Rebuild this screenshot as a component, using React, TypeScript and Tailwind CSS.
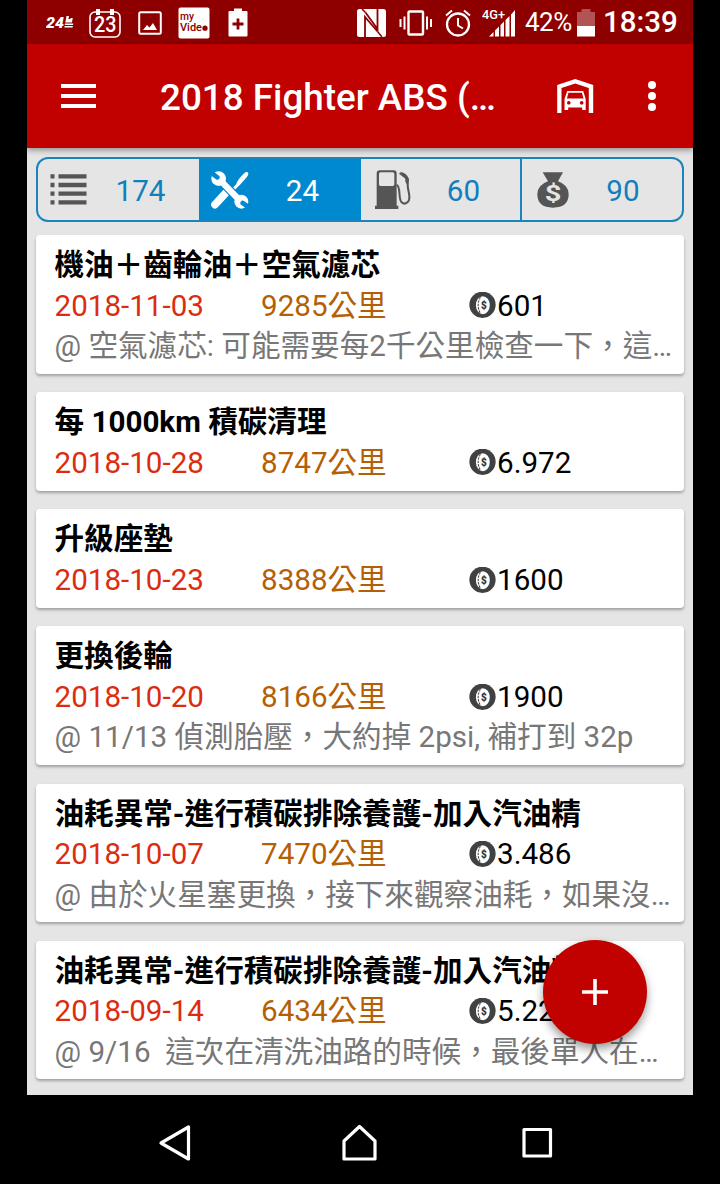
import type { ReactNode } from "react";
import clsx from "clsx";

type ServiceRecord = {
  title: string;
  date: string;
  distance: string;
  cost: string;
  note?: string;
};

const records: ServiceRecord[] = [
  {
    title: "機油＋齒輪油＋空氣濾芯",
    date: "2018-11-03",
    distance: "9285公里",
    cost: "601",
    note: "@ 空氣濾芯: 可能需要每2千公里檢查一下，這…",
  },
  { title: "每 1000km 積碳清理", date: "2018-10-28", distance: "8747公里", cost: "6.972" },
  { title: "升級座墊", date: "2018-10-23", distance: "8388公里", cost: "1600" },
  {
    title: "更換後輪",
    date: "2018-10-20",
    distance: "8166公里",
    cost: "1900",
    note: "@ 11/13 偵測胎壓，大約掉 2psi, 補打到 32p",
  },
  {
    title: "油耗異常-進行積碳排除養護-加入汽油精",
    date: "2018-10-07",
    distance: "7470公里",
    cost: "3.486",
    note: "@ 由於火星塞更換，接下來觀察油耗，如果沒…",
  },
  {
    title: "油耗異常-進行積碳排除養護-加入汽油精",
    date: "2018-09-14",
    distance: "6434公里",
    cost: "5.229",
    note: "@ 9/16  這次在清洗油路的時候，最後單人在…",
  },
];

function StatusBar() {
  return (
    <div className="flex h-11 shrink-0 items-center bg-[#8e0000] pt-[1px] pl-[19px] text-white">
      <svg className="h-[16px] w-[29px]" viewBox="0 0 29 16" fill="white">
        <text x="0" y="13" fontSize="15.500" fontWeight="900" fontStyle="italic" textLength="18" lengthAdjust="spacingAndGlyphs">
          24
        </text>
        <path d="M20.500 1h2.500l-.6 3h2l.2-1h2.200l-.9 4.500h-6.600zM19 8.500h8.300l-.3 1.500h-8.300zM18.600 11h8.300l-.3 1.500h-8.300z" />
      </svg>
      <svg className="ml-[14px] h-[30px] w-[32px]" viewBox="0 0 32 30" fill="none" stroke="white">
        <rect x="1" y="4" width="30" height="25" rx="5" strokeWidth="1.600" />
        <path d="M9 1v6M23 1v6" strokeWidth="4" />
        <text x="5" y="23.500" fill="white" stroke="none" fontSize="21.500" fontWeight="500" textLength="22.500" lengthAdjust="spacingAndGlyphs">
          23
        </text>
      </svg>
      <svg className="ml-[17px] h-[24px] w-[24px]" viewBox="0 0 24 24" fill="white">
        <rect x="1.200" y="1.200" width="21.600" height="21.600" rx="1.500" fill="none" stroke="white" strokeWidth="2" />
        <path d="M5 19l4-5 2.500 2.500L15 12l4 7z" />
      </svg>
      <svg className="ml-[16px] h-[32px] w-[32px]" viewBox="0 0 32 32">
        <rect x=".5" y=".5" width="31" height="31" rx="2" fill="white" />
        <g fill="#8e0000" fontSize="10.500" fontWeight="500">
          <text x="2" y="13" textLength="14" lengthAdjust="spacingAndGlyphs">my</text>
          <text x="2" y="24" textLength="22" lengthAdjust="spacingAndGlyphs">Vide</text>
        </g>
        <circle cx="27" cy="21.200" r="2.600" fill="#8e0000" />
      </svg>
      <svg className="ml-[18px] h-[29px] w-[20px]" viewBox="0 0 20 29">
        <path d="M1.500 3H6V.5h8V3h4.500q1 0 1 1v23.500q0 1-1 1h-17q-1 0-1-1V4q0-1 1-1z" fill="white" />
        <path d="M10 10.500v11M4.500 16h11" stroke="#8e0000" strokeWidth="2.800" />
      </svg>

      <svg className="ml-[109px] h-[28px] w-[29px]" viewBox="0 0 29 28">
        <rect width="29" height="28" rx="2.500" fill="white" />
        <path d="M8 28V8l12.500 14.500M20.500 0v20L8.500 3.500" fill="none" stroke="#8e0000" strokeWidth="1.800" />
        <path d="M5 0l3.500 3.500M20.500 22.500L25 28" stroke="#8e0000" strokeWidth="1.500" />
      </svg>
      <svg className="ml-[13px] h-[26px] w-[34px]" viewBox="0 0 34 26" fill="none" stroke="white" strokeWidth="2">
        <rect x="9.500" y="1.500" width="14.500" height="23" rx="1" strokeWidth="2.400" />
        <path d="M5.500 6.500v13M1.500 9v8M28 6.500v13M32 9v8" />
      </svg>
      <svg className="ml-[12px] h-[28px] w-[26px]" viewBox="0 0 26 28" fill="none" stroke="white" strokeWidth="2">
        <circle cx="13" cy="15.500" r="11" strokeWidth="2.300" />
        <path d="M13 9v7.500l5 3M1 6.500l6-5M25 6.500l-6-5" />
      </svg>
      <svg className="ml-[11px] h-[30px] w-[35px]" viewBox="0 0 35 30" fill="white">
        <text x="0" y="10.500" fontSize="12.500" fontWeight="500" textLength="23" lengthAdjust="spacingAndGlyphs">4G+</text>
        <path d="M7 28.500l4.500-4.500v4.500zM13 22.500l4-4v10h-4zM18.500 17l3.500-3.500v15h-3.500zM23.500 12l4-4v20.500h-4zM29 6.500L33 2v26.500h-4z" />
      </svg>
      <span className="ml-[8px] w-[47px] text-[26px] tracking-[-0.5px] whitespace-nowrap">42%</span>
      <svg className="ml-[5px] h-[28px] w-[18px]" viewBox="0 0 18 28">
        <path d="M0 3h4.500V0h9v3H18v14H0z" fill="#b35454" />
        <path d="M0 17h18v10.500H0z" fill="white" />
      </svg>
      <span className="ml-[8px] text-[29.5px] font-medium whitespace-nowrap">18:39</span>
    </div>
  );
}

function GarageIcon() {
  return (
    <svg className="h-[34px] w-[37px]" viewBox="0 0 37 34" fill="white">
      <path d="M.2 34V6L18.200 0l18 6v28h-4.400V9L18.200 4.500 4.500 9v25z" />
      <path
        fillRule="evenodd"
        d="M10.200 12h16l2.500 8v11h-3.500v-2.500h-14V31H7.500V20zM11.500 13.800l-1.600 5.700h16.600l-1.600-5.700zM11.800 22a1.800 1.800 0 1 0 .01 0zM24.700 22a1.800 1.800 0 1 0 .01 0z"
      />
    </svg>
  );
}

function AppBar() {
  return (
    <header className="relative z-10 flex h-[104px] shrink-0 items-center bg-[#c10000] pl-[34px] text-white shadow-[0_2px_6px_rgba(0,0,0,0.4)]">
      <div className="flex w-[35px] flex-col gap-[6px]">
        <span className="h-[4px] bg-white" />
        <span className="h-[4px] bg-white" />
        <span className="h-[4px] bg-white" />
      </div>
      <h1 className="ml-[64px] w-[397px] pt-[3px] text-[36.800px] font-medium whitespace-nowrap">
        2018 Fighter ABS (…
      </h1>
      <GarageIcon />
      <div className="ml-[54px] flex flex-col gap-[3px]">
        <span className="size-[8px] rounded-full bg-white" />
        <span className="size-[8px] rounded-full bg-white" />
        <span className="size-[8px] rounded-full bg-white" />
      </div>
    </header>
  );
}

function ListIcon() {
  return (
    <svg className="h-[38px] w-[38px]" viewBox="0 0 38 38" stroke="#555" strokeWidth="4.300">
      <path d="M1.500 5.300h4M9.500 5.300H37.500M1.500 14h4M9.500 14H37.500M1.500 22.700h4M9.500 22.700H37.500M1.500 31.400h4M9.500 31.400H37.500" />
    </svg>
  );
}

function ToolsIcon() {
  return (
    <svg className="h-[38px] w-[38px]" viewBox="0 0 114 114">
      <path d="M45 65L12 101" stroke="white" strokeWidth="23" strokeLinecap="round" />
      <path d="M60 56L76 39Q78 27 101 5Q109 0 112 6Q113 11 107 19Q90 39 84 44L68 61z" fill="white" />
      <path d="M28 28L88 90" stroke="#0089cf" strokeWidth="26" />
      <circle cx="23" cy="23" r="22" fill="white" />
      <circle cx="91" cy="92" r="21" fill="white" />
      <path d="M28 28L88 90" stroke="white" strokeWidth="19" />
      <path d="M19 19L-4 2M95 96L118 112" stroke="#0089cf" strokeWidth="14" strokeLinecap="round" />
      <path d="M0 0H16L0 15z" fill="#0089cf" />
      <path d="M114 114H99L114 101z" fill="#0089cf" />
    </svg>
  );
}

function FuelIcon() {
  return (
    <svg className="h-[39px] w-[37px]" viewBox="0 0 111 117">
      <path
        fill="#555"
        fillRule="evenodd"
        d="M15 1H56Q65 1 65 10V107H70V117H0V107H5V10Q5 1 15 1zM17 7Q12 7 12 12V43Q12 48 17 48H53Q58 48 58 43V12Q58 7 53 7z"
      />
      <path d="M65 45C78 48 69 88 80 97C91 107 105 95 103 79C102 63 98 61 98 43V28L74 9" fill="none" stroke="#555" strokeWidth="6" />
      <path d="M76 5Q96 9 102 27L99 48L91 35V24z" fill="#555" />
    </svg>
  );
}

function MoneyBagIcon() {
  return (
    <svg className="h-[36px] w-[32px]" viewBox="0 0 96 108">
      <path d="M17 1H78L63 28Q95 39 95 67Q95 107 48 107Q1 107 1 67Q1 39 33 28z" fill="#555" />
      <text x="23" y="87" fontSize="64" fontWeight="700" fill="#e5e5e5" textLength="50" lengthAdjust="spacingAndGlyphs">
        $
      </text>
    </svg>
  );
}

const tabs: { icon: ReactNode; count: string; active?: boolean; className: string }[] = [
  { icon: <ListIcon />, count: "174", className: "w-[161px] pl-[11px]" },
  { icon: <ToolsIcon />, count: "24", active: true, className: "w-[162px] pl-[12px]" },
  { icon: <FuelIcon />, count: "60", className: "w-[161px] border-r-2 border-[#1a84bd] pl-[14px]" },
  { icon: <MoneyBagIcon />, count: "90", className: "flex-1 pl-[15px]" },
];

function CategoryTabs() {
  return (
    <nav className="flex h-[65px] shrink-0 overflow-hidden rounded-[12px] border-2 border-[#1a84bd]">
      {tabs.map((tab) => (
        <div
          key={tab.count}
          className={clsx(
            "flex items-center text-[29.600px]",
            tab.active ? "bg-[#0089cf] text-white" : "text-[#117fbd]",
            tab.className,
          )}
        >
          {tab.icon}
          <span className="flex-1 pt-[4px] pr-[5px] text-center">{tab.count}</span>
        </div>
      ))}
    </nav>
  );
}

function CoinIcon() {
  return (
    <svg className="mr-[1.500px] size-[27px]" viewBox="0 0 78 78">
      <circle cx="39" cy="37" r="38" fill="#414141" />
      <ellipse cx="40" cy="38" rx="20" ry="26" fill="white" />
      <path d="M33 15Q20 37 33 62" fill="none" stroke="#414141" strokeWidth="3" strokeDasharray="7 3" />
      <text x="43" y="48" fontSize="29" fontWeight="900" textAnchor="middle" fill="#333">
        $
      </text>
    </svg>
  );
}

function RecordCard({ record }: { record: ServiceRecord }) {
  return (
    <article
      className={clsx(
        "shrink-0 rounded-[4px] bg-white pt-[10px] pl-[18.500px] text-[29.600px] whitespace-pre shadow-[0_2px_3px_rgba(0,0,0,0.3)]",
        record.note ? "h-[138.700px]" : "h-[98.600px]",
      )}
    >
      <h2 className="leading-[40.500px] font-bold text-black">{record.title}</h2>
      <div className="flex leading-[40.500px]">
        <span className="w-[206.500px] text-[#dc2c10]">{record.date}</span>
        <span className="w-[207.500px] text-[#b45f06]">{record.distance}</span>
        <span className="flex items-center text-black">
          <CoinIcon />
          {record.cost}
        </span>
      </div>
      {record.note && <p className="leading-[40.500px] text-[#777]">{record.note}</p>}
    </article>
  );
}

function NavigationBar() {
  return (
    <div className="flex h-[89px] shrink-0 items-center bg-black pt-[6px] pl-[158px]">
      <svg className="h-[38px] w-[34px]" viewBox="0 0 34 38" fill="none" stroke="white" strokeWidth="3.200" strokeLinejoin="round">
        <path d="M30.500 3v32L3 19z" />
      </svg>
      <svg className="ml-[149px] h-[38px] w-[38px]" viewBox="0 0 38 38" fill="none" stroke="white" strokeWidth="3.200" strokeLinejoin="round">
        <path d="M3 17L18.500 2.500 34 17v18H3z" />
      </svg>
      <svg className="ml-[142px] h-[32px] w-[34px]" viewBox="0 0 34 32" fill="none" stroke="white" strokeWidth="3.200" strokeLinejoin="round">
        <rect x="3" y="2.500" width="26.500" height="26.500" />
      </svg>
    </div>
  );
}

export default function App() {
  return (
    <div className="h-[1184px] w-[720px] overflow-hidden bg-black font-['Roboto','Noto_Sans_CJK_TC',sans-serif]">
      <div className="relative ml-[27px] flex h-[1095px] w-[666px] flex-col bg-[#e5e5e5]">
        <StatusBar />
        <AppBar />
        <main className="flex flex-1 flex-col px-[9px] pt-[9px]">
          <CategoryTabs />
          <div className="mt-[13px] flex flex-col gap-[18.500px]">
            {records.map((record) => (
              <RecordCard key={record.date} record={record} />
            ))}
          </div>
        </main>
        <button
          aria-label="Add record"
          className="absolute right-[46px] bottom-[51px] flex size-[104px] items-center justify-center rounded-full bg-[#c10000] shadow-[0_5px_10px_rgba(0,0,0,0.4)]"
        >
          <svg className="size-[26px]" viewBox="0 0 26 26" stroke="white" strokeWidth="3.600">
            <path d="M13 0v26M0 13h26" />
          </svg>
        </button>
      </div>
      <NavigationBar />
    </div>
  );
}
